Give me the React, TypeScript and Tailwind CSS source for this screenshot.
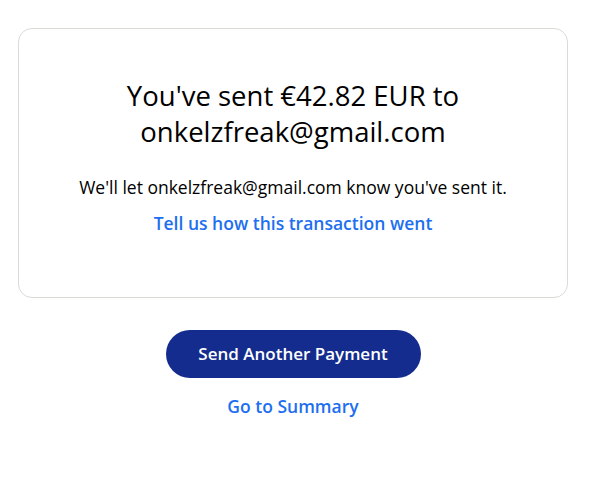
export default function App() {
  return (
    <div className="w-[591px] h-[487px] bg-white px-[18px] pt-[28px]" style={{ fontFamily: "'Open Sans', 'Noto Sans', sans-serif" }}>
      <div className="w-[550px] h-[270px] border border-[#dcdad5] rounded-[14px] flex flex-col items-center pt-[49px]">
        <h1 className="text-[27.5px] leading-[36px] text-[#000] text-center w-[420px]">
          You've sent €42.82 EUR to onkelzfreak@gmail.com
        </h1>
        <p className="mt-[25px] text-[17.5px] leading-[24px] text-[#000]">
          We'll let onkelzfreak@gmail.com know you've sent it.
        </p>
        <a className="mt-[12px] text-[17.5px] leading-[24px] font-semibold text-[#1d6ff0]">Tell us how this transaction went</a>
      </div>
      <div className="w-[550px] flex flex-col items-center mt-[32px]">
        <button className="w-[255px] h-[48px] rounded-full bg-[#142c8e] text-white text-[17px] font-semibold">
          Send Another Payment
        </button>
        <a className="mt-[16px] text-[17.5px] leading-[24px] font-semibold text-[#1d6ff0]">Go to Summary</a>
      </div>
    </div>
  );
}
